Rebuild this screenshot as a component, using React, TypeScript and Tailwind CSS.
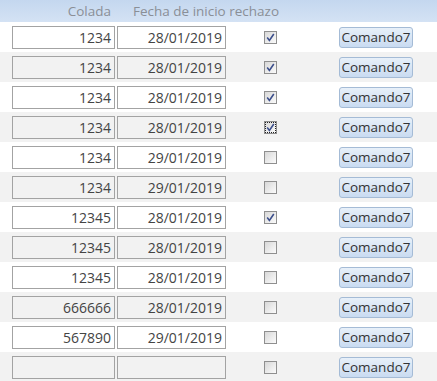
import React from 'react'

type Row = { colada: string; fecha: string; checked: boolean; focus?: boolean }

const rows: Row[] = [
  { colada: '1234', fecha: '28/01/2019', checked: true },
  { colada: '1234', fecha: '28/01/2019', checked: true },
  { colada: '1234', fecha: '28/01/2019', checked: true },
  { colada: '1234', fecha: '28/01/2019', checked: true, focus: true },
  { colada: '1234', fecha: '29/01/2019', checked: false },
  { colada: '1234', fecha: '29/01/2019', checked: false },
  { colada: '12345', fecha: '28/01/2019', checked: true },
  { colada: '12345', fecha: '28/01/2019', checked: false },
  { colada: '12345', fecha: '28/01/2019', checked: false },
  { colada: '666666', fecha: '28/01/2019', checked: false },
  { colada: '567890', fecha: '29/01/2019', checked: false },
  { colada: '', fecha: '', checked: false },
]

function CheckBox({ checked, focus }: { checked: boolean; focus?: boolean }) {
  return (
    <div className="w-[13px] h-[13px] border border-[#8f8f8f] bg-gradient-to-br from-[#d8d8d8] to-[#fbfbfb] flex items-center justify-center">
      <div
        className={
          'w-[11px] h-[11px] flex items-center justify-center ' +
          (focus ? 'border border-dotted border-[#222]' : '')
        }
      >
        {checked && (
          <svg width="9" height="9" viewBox="0 0 9 9">
            <path d="M1.2 4.6 L3.4 7.4 L7.8 1" fill="none" stroke="#3c4f8c" strokeWidth="1.6" />
          </svg>
        )}
      </div>
    </div>
  )
}

export default function App() {
  return (
    <div className="w-[437px] h-[381px] bg-white overflow-hidden" style={{ fontFamily: '"Open Sans", "Noto Sans", sans-serif' }}>
      {/* header */}
      <div className="h-[22px] flex items-center bg-gradient-to-b from-[#c4d7ef] to-[#d4e2f4] text-[13.5px] text-[#8a8f97]">
        <div className="w-[111px] text-right">Colada</div>
        <div className="ml-[22px]">Fecha de inicio rechazo</div>
      </div>

      {rows.map((r, i) => {
        const alt = i % 2 === 1
        return (
          <div key={i} className={'h-[30px] flex items-center pl-[12px] ' + (alt ? 'bg-[#f2f2f2]' : 'bg-white')}>
            <div className={'w-[103px] h-[23px] border border-[#a3a3a3] text-right pr-[3px] text-[14px] leading-[21px] text-[#444] ' + (alt ? 'bg-[#f2f2f2]' : 'bg-white')}>
              {r.colada}
            </div>
            <div className={'ml-[2px] w-[109px] h-[23px] border border-[#a3a3a3] text-right pr-[3px] text-[14px] leading-[21px] text-[#444] ' + (alt ? 'bg-[#f2f2f2]' : 'bg-white')}>
              {r.fecha}
            </div>
            <div className="ml-[38px]">
              <CheckBox checked={r.checked} focus={r.focus} />
            </div>
            <button className="ml-[62px] w-[74px] h-[21px] rounded-[3px] border border-[#a4bbd6] bg-gradient-to-b from-[#e8f0f9] to-[#c9dbf1] text-[13.5px] leading-[19px] text-[#333]">
              Comando7
            </button>
          </div>
        )
      })}
    </div>
  )
}
